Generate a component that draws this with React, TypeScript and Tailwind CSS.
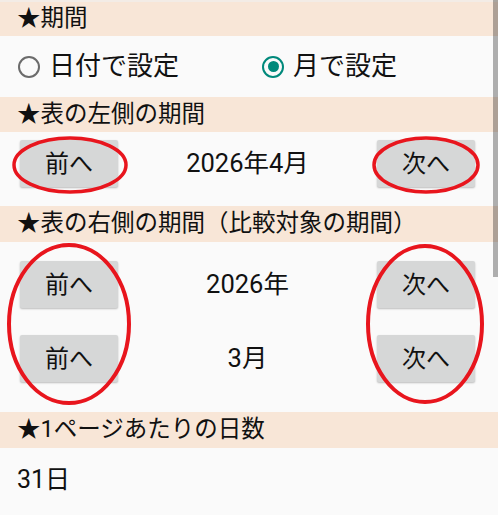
import React, { useState } from 'react';

const Header = ({ title, className }: { title: string; className: string }) => (
    <div className={`flex items-center bg-[#f8e6d7] px-[17px] text-[23.5px] text-[#111] ${className}`}>
        {title}
    </div>
);

const NavButton = ({ label }: { label: string }) => (
    <button className="w-[98px] h-[47px] rounded-[2px] bg-[#d6d7d7] shadow-[0_1px_2px_rgba(0,0,0,0.25)] text-[24px] text-[#111] flex items-center justify-center">
        {label}
    </button>
);

const Radio = ({ checked, label, onClick }: { checked: boolean; label: string; onClick: () => void }) => (
    <label className="flex items-center gap-[9px] cursor-pointer" onClick={onClick}>
        {checked ? (
            <span className="w-[22px] h-[22px] rounded-full border-[2.5px] border-[#00897b] flex items-center justify-center">
                <span className="w-[11px] h-[11px] rounded-full bg-[#00897b]" />
            </span>
        ) : (
            <span className="w-[22px] h-[22px] rounded-full border-[2.5px] border-[#6b6b6b]" />
        )}
        <span className="text-[26px] text-[#111]">{label}</span>
    </label>
);

const App = () => {
    const [mode, setMode] = useState<'day' | 'month'>('month');

    return (
        <div
            className="relative w-[498px] h-[515px] overflow-hidden bg-[#fafafa] flex flex-col"
            style={{ fontFamily: "Roboto, 'Noto Sans CJK JP', sans-serif" }}
        >
            <div className="h-[2px] bg-[#f3ece6]" />
            <Header title="★期間" className="h-[34px]" />
            <div className="h-[61px] flex items-center pl-[18px]">
                <div className="w-[244px]">
                    <Radio checked={mode === 'day'} label="日付で設定" onClick={() => setMode('day')} />
                </div>
                <Radio checked={mode === 'month'} label="月で設定" onClick={() => setMode('month')} />
            </div>

            <Header title="★表の左側の期間" className="h-[35px]" />
            <div className="h-[74px] pt-[8px] pl-[20px] pr-[23px] flex items-start">
                <NavButton label="前へ" />
                <div className="flex-1 h-[47px] flex items-center justify-center text-[25.5px] text-[#111]">2026年4月</div>
                <NavButton label="次へ" />
            </div>

            <Header title="★表の右側の期間（比較対象の期間）" className="h-[36px]" />
            <div className="h-[170px] pt-[19px] pl-[20px] pr-[23px] flex flex-col gap-[27px]">
                <div className="flex items-center">
                    <NavButton label="前へ" />
                    <div className="flex-1 text-center text-[25.5px] text-[#111]">2026年</div>
                    <NavButton label="次へ" />
                </div>
                <div className="flex items-center">
                    <NavButton label="前へ" />
                    <div className="flex-1 text-center text-[25.5px] text-[#111]">3月</div>
                    <NavButton label="次へ" />
                </div>
            </div>

            <Header title="★1ページあたりの日数" className="h-[36px]" />
            <div className="flex-1 pl-[17px] pt-[13px] text-[25px] text-[#111]">31日</div>

            {/* red annotation rings drawn over the screenshot */}
            <svg className="absolute inset-0 pointer-events-none" width="498" height="515">
                <g fill="none" stroke="#e8151d" strokeWidth="3.5">
                    <ellipse cx="70" cy="165" rx="56" ry="27" />
                    <ellipse cx="426" cy="165" rx="52" ry="27" />
                    <ellipse cx="69" cy="324" rx="60" ry="79" strokeWidth="4" />
                    <ellipse cx="425" cy="324" rx="57" ry="78" strokeWidth="4" />
                </g>
            </svg>

            {/* scrollbar */}
            <div className="absolute top-0 right-0 w-[5px] h-[277px] bg-black/30" />
        </div>
    );
};

export default App;
